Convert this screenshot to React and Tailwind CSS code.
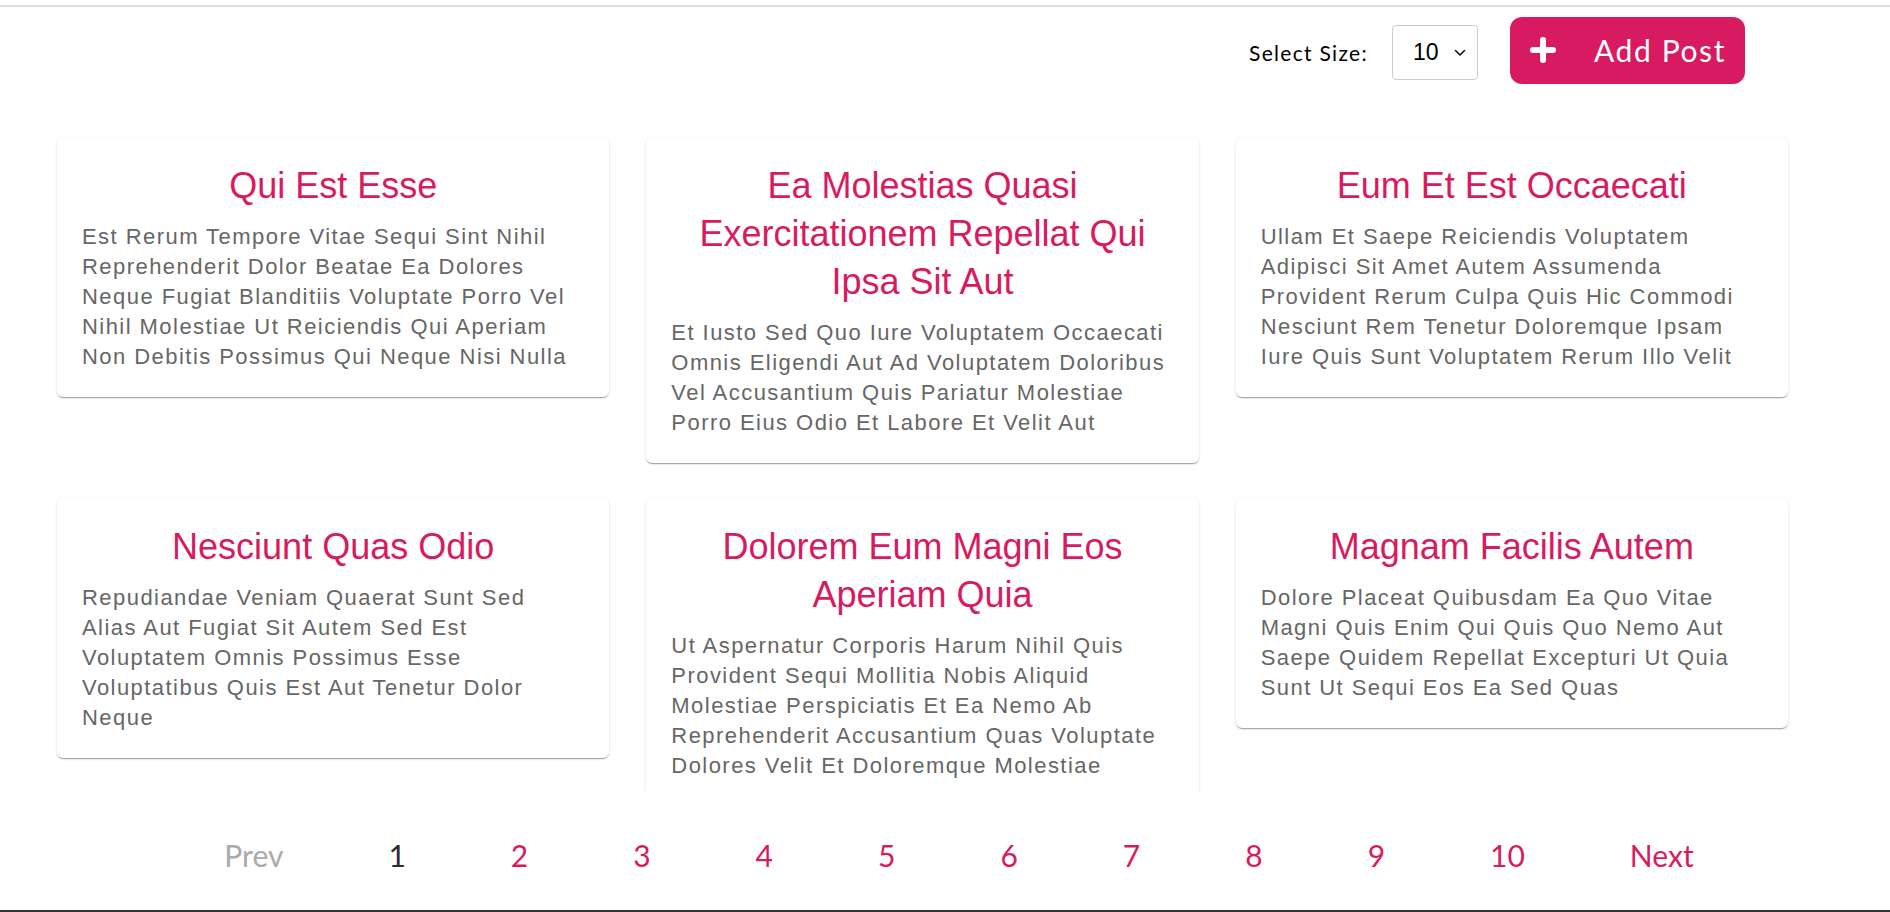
import React, { useState } from 'react';

const posts = [
  {
    id: 2,
    title: 'Qui Est Esse',
    body: 'Est Rerum Tempore Vitae Sequi Sint Nihil Reprehenderit Dolor Beatae Ea Dolores Neque Fugiat Blanditiis Voluptate Porro Vel Nihil Molestiae Ut Reiciendis Qui Aperiam Non Debitis Possimus Qui Neque Nisi Nulla',
  },
  {
    id: 3,
    title: 'Ea Molestias Quasi Exercitationem Repellat Qui Ipsa Sit Aut',
    body: 'Et Iusto Sed Quo Iure Voluptatem Occaecati Omnis Eligendi Aut Ad Voluptatem Doloribus Vel Accusantium Quis Pariatur Molestiae Porro Eius Odio Et Labore Et Velit Aut',
  },
  {
    id: 4,
    title: 'Eum Et Est Occaecati',
    body: 'Ullam Et Saepe Reiciendis Voluptatem Adipisci Sit Amet Autem Assumenda Provident Rerum Culpa Quis Hic Commodi Nesciunt Rem Tenetur Doloremque Ipsam Iure Quis Sunt Voluptatem Rerum Illo Velit',
  },
  {
    id: 5,
    title: 'Nesciunt Quas Odio',
    body: 'Repudiandae Veniam Quaerat Sunt Sed Alias Aut Fugiat Sit Autem Sed Est Voluptatem Omnis Possimus Esse Voluptatibus Quis Est Aut Tenetur Dolor Neque',
  },
  {
    id: 6,
    title: 'Dolorem Eum Magni Eos Aperiam Quia',
    body: 'Ut Aspernatur Corporis Harum Nihil Quis Provident Sequi Mollitia Nobis Aliquid Molestiae Perspiciatis Et Ea Nemo Ab Reprehenderit Accusantium Quas Voluptate Dolores Velit Et Doloremque Molestiae',
  },
  {
    id: 7,
    title: 'Magnam Facilis Autem',
    body: 'Dolore Placeat Quibusdam Ea Quo Vitae Magni Quis Enim Qui Quis Quo Nemo Aut Saepe Quidem Repellat Excepturi Ut Quia Sunt Ut Sequi Eos Ea Sed Quas',
  },
];

const PlusIcon = () => (
  <svg width="26" height="26" viewBox="0 0 26 26" fill="none">
    <path d="M13 3v20M3 13h20" stroke="#fff" strokeWidth="6" strokeLinecap="round" />
  </svg>
);

const ChevronDown = () => (
  <svg width="12" height="8" viewBox="0 0 12 8" fill="none">
    <path d="M1.5 1.5L6 6l4.5-4.5" stroke="#111" strokeWidth="1.6" strokeLinecap="round" strokeLinejoin="round" />
  </svg>
);

const PostCard = ({ post }) => (
  <div className="rounded-[6px] bg-white px-[25px] pt-[25px] pb-[25px] font-['Liberation_Sans',Arial,sans-serif] shadow-[0_2px_1px_-1px_rgba(0,0,0,0.2),0_1px_1px_0_rgba(0,0,0,0.14),0_1px_3px_0_rgba(0,0,0,0.12)]">
    <h2 className="mb-[12px] text-center text-[36px] leading-[48px] text-[#d81b60]">{post.title}</h2>
    <p className="text-[22px] leading-[30px] tracking-[1.45px] text-[#666666]">{post.body}</p>
  </div>
);

const App = () => {
  const [size, setSize] = useState('10');
  const [page, setPage] = useState(1);
  const pages = [1, 2, 3, 4, 5, 6, 7, 8, 9, 10];

  return (
    <div className="flex h-[912px] flex-col overflow-hidden bg-white font-['Lato',sans-serif]">
      <div className="mt-[5px] h-[2px] shrink-0 bg-[#dddddd]" />

      {/* Header */}
      <header className="flex h-[86px] shrink-0 items-center justify-end pr-[145px]">
        <span className="mt-[5px] text-[21px] tracking-[1.3px] text-black">Select Size:</span>
        <div className="relative mt-[5px] ml-[24px]">
          <select
            value={size}
            onChange={(e) => setSize(e.target.value)}
            className="h-[55px] w-[86px] appearance-none rounded-[4px] border border-[#cccccc] bg-white pl-[20px] font-['Liberation_Sans',Arial,sans-serif] text-[23px] text-black"
          >
            <option value="10">10</option>
            <option value="20">20</option>
            <option value="50">50</option>
          </select>
          <span className="pointer-events-none absolute top-[24px] right-[12px]">
            <ChevronDown />
          </span>
        </div>
        <button className="ml-[32px] flex h-[67px] w-[235px] items-center gap-[38px] rounded-[12px] bg-[#d81b60] pl-[20px] text-white">
          <PlusIcon />
          <span className="text-[30px] tracking-[1.6px]">Add Post</span>
        </button>
      </header>

      {/* Posts */}
      <main className="h-[698px] shrink-0 overflow-hidden pt-[44px] pr-[102px] pl-[57px]">
        <div className="grid grid-cols-3 items-start gap-x-[37px] gap-y-[35px]">
          {posts.map((post) => (
            <PostCard key={post.id} post={post} />
          ))}
        </div>
      </main>

      {/* Pagination */}
      <nav className="flex h-[119px] shrink-0 items-center justify-center gap-[105px] pt-[10px] pl-[28px] text-[30px]">
        <button className="text-[#aaaaaa]">Prev</button>
        {pages.map((p) => (
          <button
            key={p}
            onClick={() => setPage(p)}
            className={p === page ? 'text-[#2b2b3a]' : 'text-[#d81b60]'}
          >
            {p}
          </button>
        ))}
        <button className="text-[#d81b60]">Next</button>
      </nav>

      <div className="h-[2px] shrink-0 bg-[#333333]" />
    </div>
  );
};

export default App;
